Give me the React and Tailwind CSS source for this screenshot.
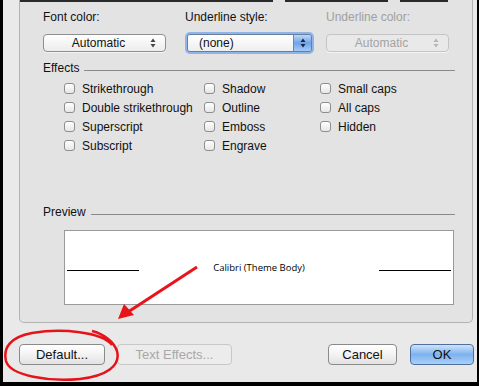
import React from "react";

const font = { fontFamily: '"Liberation Sans", Arial, sans-serif' };

function Arrows({ color = "#333" }) {
  return (
    <svg width="6" height="10" viewBox="0 0 6 10">
      <path d="M3 0.5 L5.5 4 L0.5 4 Z" fill={color} />
      <path d="M3 9.5 L5.5 6 L0.5 6 Z" fill={color} />
    </svg>
  );
}

function Popup({ label, width, disabled }) {
  return (
    <div
      className={`relative flex h-[18px] items-center justify-center rounded-[4px] border ${
        disabled
          ? "border-[#c4c4c4] bg-[#e9e9e9] text-[#a3a3a3]"
          : "border-[#8f8f8f] bg-gradient-to-b from-white to-[#ececec] text-[#111]"
      } text-[12px] shadow-[0_1px_0_rgba(255,255,255,0.6)]`}
      style={{ width }}
    >
      <span className="-ml-[12px]">{label}</span>
      <span className="absolute right-[9px] top-[3px]">
        <Arrows color={disabled ? "#b5b5b5" : "#444"} />
      </span>
    </div>
  );
}

function FocusPopup() {
  return (
    <div className="-mt-[2px] flex h-[22px] w-[129px] rounded-[5px] p-[2px] bg-[#8fb4e8]">
      <div className="flex h-[18px] flex-1 overflow-hidden rounded-[3px] border border-[#6a7e9c]">
        <div className="flex flex-1 items-center bg-gradient-to-b from-white to-[#eeeeee] pl-[11px] text-[12px] text-[#111]">
          (none)
        </div>
        <div className="flex w-[18px] items-center justify-center border-l border-[#6d86ad] bg-gradient-to-b from-[#bfd7f7] via-[#6fa3ea] to-[#a4cbf6]">
          <Arrows color="#1b2a44" />
        </div>
      </div>
    </div>
  );
}

function Check({ label }) {
  return (
    <div className="flex h-[19px] items-center">
      <div className="h-[11px] w-[11px] rounded-[3px] border border-[#8e8e8e] bg-gradient-to-b from-white to-[#e6e6e6]" />
      <span className="ml-[7px] text-[12px] text-[#111]">{label}</span>
    </div>
  );
}

function Button({ children, width, disabled, primary }) {
  let cls =
    "border-[#8a8a8a] bg-gradient-to-b from-white via-[#f3f3f3] to-[#e2e2e2] text-[#111]";
  if (disabled) cls = "border-[#c8c8c8] bg-[#ececec] text-[#a8a8a8]";
  if (primary)
    cls =
      "border-[#4f6f9e] bg-gradient-to-b from-[#cfe2fb] via-[#7eb2ee] to-[#a9d0f8] text-[#111]";
  return (
    <div
      className={`flex h-[21px] items-center justify-center rounded-[4px] border text-[13px] ${cls}`}
      style={{ width }}
    >
      {children}
    </div>
  );
}

export default function App() {
  return (
    <div
      className="relative h-[386px] w-[479px] overflow-hidden border-b-[4px] border-l-[3px] border-r-[2px] border-black bg-[#e9e9e9]"
      style={font}
    >
      {/* Tab panel */}
      <div className="ml-[16px] h-[323px] w-[454px] rounded-b-[5px] border border-t-0 border-[#b3b3b3] bg-[#e3e3e3]">
        {/* segmented control bottom */}
        <div className="flex h-[2px]">
          <div className="w-[253px] bg-[#2a2a2a]" />
          <div className="w-[12px]" />
          <div className="w-[103px] bg-[#2a2a2a]" />
          <div className="w-[12px]" />
          <div className="w-[48px] bg-[#2a2a2a]" />
        </div>

        <div className="pl-[23px] pr-[17px]">
          {/* labels */}
          <div className="mt-[8px] grid grid-cols-[142px_141px_130px] text-[12px] leading-[14px]">
            <div className="text-[#111]">Font color:</div>
            <div className="text-[#111]">Underline style:</div>
            <div className="text-[#a0a0a0]">Underline color:</div>
          </div>
          <div className="mt-[10px] grid grid-cols-[142px_141px_130px]">
            <Popup label="Automatic" width={123} />
            <FocusPopup />
            <Popup label="Automatic" width={123} disabled />
          </div>

          {/* Effects */}
          <div className="mt-[7px] flex h-[14px] items-center text-[12px] text-[#111]">
            <span>Effects</span>
            <div className="ml-[5px] mt-[4px] h-px flex-1 bg-[#8a8a8a]" />
          </div>
          <div className="ml-[21px] mt-[4px] grid grid-cols-[140px_116px_120px]">
            <div>
              <Check label="Strikethrough" />
              <Check label="Double strikethrough" />
              <Check label="Superscript" />
              <Check label="Subscript" />
            </div>
            <div>
              <Check label="Shadow" />
              <Check label="Outline" />
              <Check label="Emboss" />
              <Check label="Engrave" />
            </div>
            <div>
              <Check label="Small caps" />
              <Check label="All caps" />
              <Check label="Hidden" />
            </div>
          </div>

          {/* Preview */}
          <div className="mt-[50px] flex h-[14px] items-center text-[12px] text-[#111]">
            <span>Preview</span>
            <div className="ml-[5px] mt-[4px] h-px flex-1 bg-[#8a8a8a]" />
          </div>
          <div className="ml-[21px] mt-[11px] h-[75px] w-[390px] border border-[#9a9a9a] bg-white px-[2px] pt-[31px]">
            <div className="flex h-[12px] items-start justify-between">
              <div className="mt-[8px] h-px w-[72px] bg-black" />
              <span
                className="text-[9.5px] leading-[12px] text-black"
                style={{ fontFamily: '"Open Sans", "Liberation Sans", sans-serif' }}
              >
                Calibri (Theme Body)
              </span>
              <div className="mt-[8px] h-px w-[72px] bg-black" />
            </div>
          </div>
        </div>
      </div>

      {/* Buttons */}
      <div className="ml-[16px] mt-[21px] flex items-center">
        <Button width={86}>Default...</Button>
        <div className="ml-[12px]">
          <Button width={115} disabled>
            Text Effects...
          </Button>
        </div>
        <div className="ml-[96px]">
          <Button width={69}>Cancel</Button>
        </div>
        <div className="ml-[13px]">
          <Button width={64} primary>
            OK
          </Button>
        </div>
      </div>

      {/* Annotation overlay */}
      <svg
        className="pointer-events-none absolute left-[-3px] top-0"
        width="479"
        height="386"
        viewBox="0 0 479 386"
      >
        <path
          d="M112 345 C 102 332, 62 328, 32 333 C 10 337, 3 348, 6 361 C 10 376, 50 382, 80 379 C 106 376, 121 366, 117 351 C 114 342, 104 334, 92 331"
          fill="none"
          stroke="#e5141a"
          strokeWidth="2.5"
        />
        <line x1="197" y1="267" x2="128" y2="312" stroke="#e8141a" strokeWidth="3" />
        <path d="M118 319 L124 304 L134 315 Z" fill="#e8141a" />
      </svg>
    </div>
  );
}
